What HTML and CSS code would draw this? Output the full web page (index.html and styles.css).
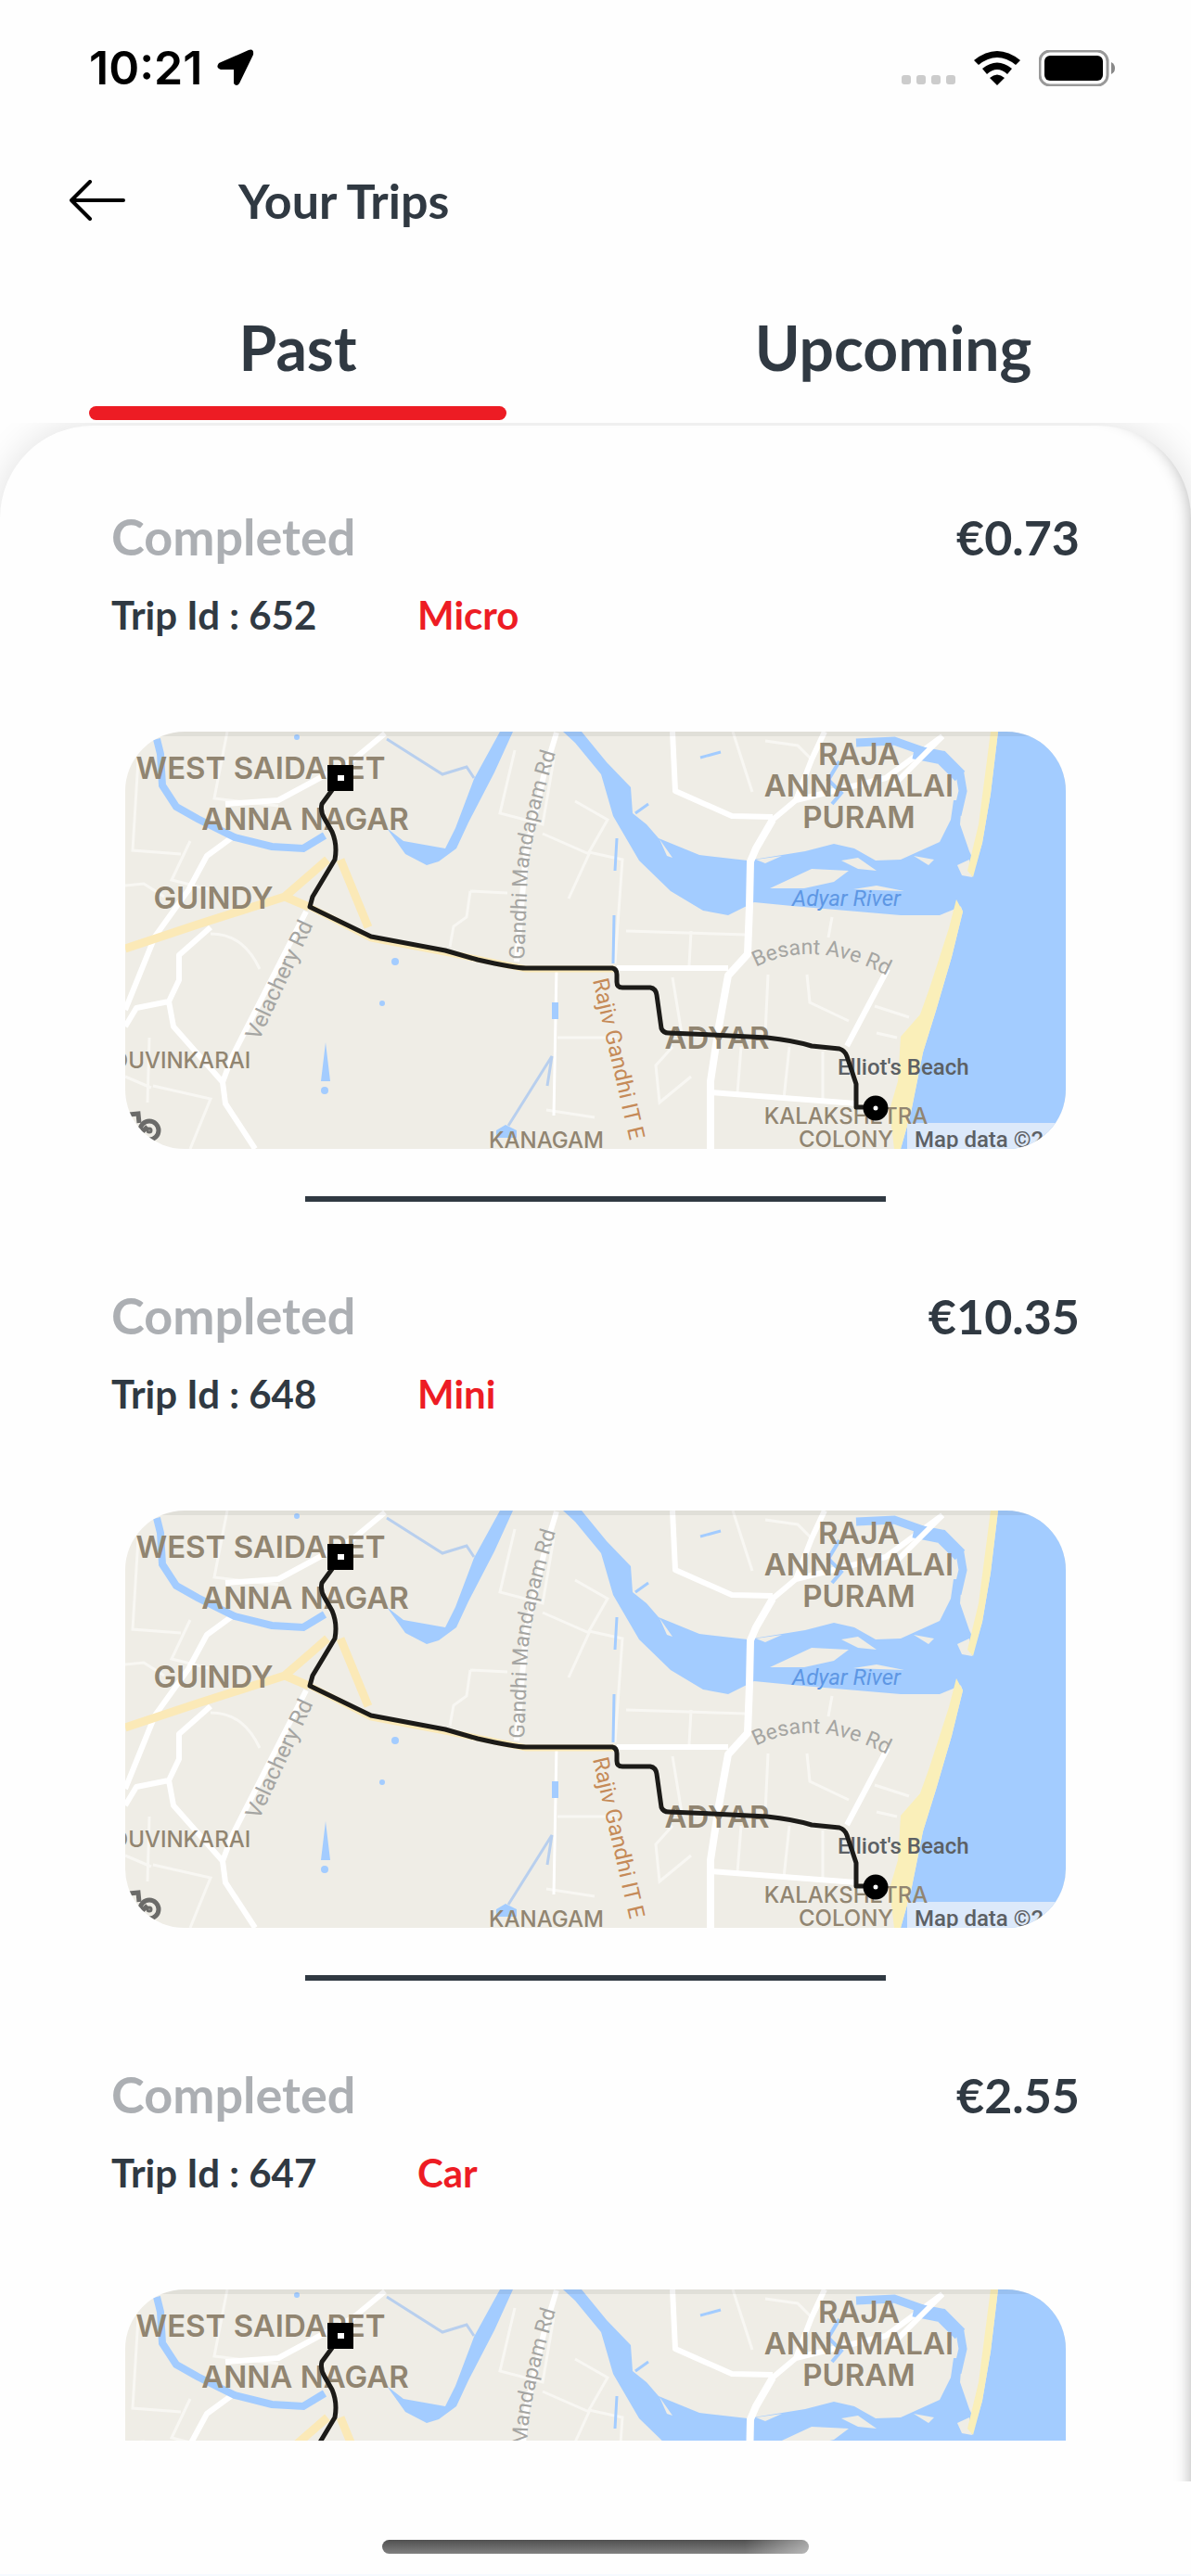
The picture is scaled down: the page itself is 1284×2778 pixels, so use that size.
FILE: index.html
```html
<!DOCTYPE html>
<html lang="en">

<head>
    <meta charset="UTF-8">
    <meta name="viewport" content="width=device-width, initial-scale=1.0">
    <title>Your Trips</title>
    <link rel="stylesheet" href="styles.css">
</head>

<body>

    <!-- shared map drawing -->
    <svg class="defs" width="0" height="0" aria-hidden="true">
        <symbol id="ground" viewBox="0 0 1014 450">
            <rect width="1014" height="450" fill="#efede6" />
            <g fill="none" stroke="#f8f7f3" stroke-width="3">
                <path d="M110 0L96 72 165 80M14 30L8 128 60 132M70 118L50 160 90 170M0 166L20 164 42 178" />
                <path d="M92 218C120 218 135 235 145 256M30 382L92 396 70 450M24 400L26 330M0 372L28 384" />
                <path d="M420 20L404 88 450 100 462 30M450 110L500 132 478 180M485 75L520 95 500 130 536 138 528 250" />
                <path d="M372 172L412 174M372 172L368 200 354 210 350 232M466 330L530 330M454 408L506 416" />
                <path d="M540 215L670 219M610 215L608 252M655 0L676 65M690 10L725 15 740 30M590 265L600 326M693 262L690 326M735 262L738 292 780 312M808 296L845 308M762 200L758 222M590 340L572 360 576 400 610 372M664 340L660 390M716 340L710 396M752 345L752 398M810 325L832 330" />
            </g>
            <g fill="none" stroke="#fff" stroke-width="6" stroke-linejoin="round">
                <path d="M280 2L245 31 165 74 108 78M118 112L88 134 68 171 32 221 0 300" />
                <path d="M92 211L58 241 58 268 47 291 52 318 105 378 108 401 140 450M47 291L12 298 0 318M195 194L115 351 105 378" />
                <path d="M465 1L452 44 432 131 422 248" />
                <path d="M465 254L462 414" stroke-width="3" />
                <path d="M590 0L593 64 654 91 698 92M754 0L740 30 723 74 698 95 678 128M723 74L820 50 881 5" />
                <path d="M530 255L650 255M631 389L788 401M822 256L778 339" />
            </g>
            <g fill="none" stroke="#fbe9b7" stroke-width="9">
                <path d="M0 234L78 208 172 178 218 138M172 178L198 189M232 138L262 211" />
                <path d="M199 189L265 223 345 238 432 256 528 256" stroke-width="7" />
            </g>
            <g fill="#a3ccff">
                <path d="M282 104L300 118 345 126 356 104 376 51 404 0 418 0 398 44 370 98 357 126 338 140 325 144 302 132Z" />
                <path d="M472 0L485 12 513 46 526 91 554 139 588 172 623 193 650 198 678 184 719 188 836 198 878 198 895 191 930 175 920 150 910 129 900 100 902 74 893 74 890 95 878 119 836 138 809 139 786 126 764 121 733 129 671 139 619 133 575 115 562 100 547 88 545 60 519 33 492 0Z" />
                <path d="M941 0L933 67 924 120 913 157 898 168 898 181 903 194 891 243 874 301 860 346 847 411 836 450 1014 450 1014 0Z" />
                <path d="M216 335L221 377 211 377ZM460 292h7v18h-7zM400 430l10-6 12 6v8h-22z" />
                <circle cx="291" cy="248" r="4" />
                <circle cx="277" cy="293" r="3" />
                <circle cx="215" cy="387" r="4" />
                <circle cx="185" cy="6" r="3" />
            </g>
            <g fill="none" stroke="#a3ccff">
                <path d="M34 8L38 24 40 58 55 81 78 94 118 114 158 124 192 126 215 112" stroke-width="8" />
                <path d="M788 12L829 10 874 26 900 46 903 64 897 90" stroke-width="9" />
                <path d="M850 22L880 28 900 48" stroke-width="15" />
                <path d="M770 32L758 52 772 66 762 78" stroke-width="4" />
                <path d="M282 8L342 46 368 38 376 50M413 425L460 350 455 382" stroke-width="3" stroke="#b8cfee" />
                <path d="M530 115L528 150M527 198L526 250M550 88L564 78M620 28L642 22" stroke-width="3" />
            </g>
            <g fill="#efede6">
                <path d="M695 169L740 148 780 150 764 162 732 169ZM772 139L790 136 810 150 790 148ZM850 134L872 138 866 144ZM785 170L810 166 840 172ZM680 138L708 134 690 142ZM576 116L590 136 584 134Z" />
                <path d="M897 144L910 138 913 157 902 155Z" />
            </g>
            <g fill="#faefb9">
                <path d="M933 0L941 0 933 67 924 120 914 157 908 150 920 100Z" />
                <path d="M896 181L903 194 891 243 874 301 860 346 847 411 836 450 829 450 824 408 833 377 836 329 857 305 867 277 888 212Z" />
            </g>
            <path d="M698 95L680 126 674 140 673 188 671 240 650 263 640 318 631 377 631 450" fill="none" stroke="#fff" stroke-width="8" stroke-linejoin="round" />
            <path d="M826 60L881 5" fill="none" stroke="#fff" stroke-width="6" />
            <rect x="843" y="422" width="171" height="28" fill="#dce9fa" />
            <g fill="none" stroke="#6b6b69" stroke-width="5">
                <path d="M4 413L14 412 15 422M14 436L24 426" />
                <circle cx="26" cy="430" r="10" />
                <circle cx="26" cy="430" r="2" stroke-width="3" />
            </g>
            <rect width="1014" height="5" fill="#000" opacity=".06" />
        </symbol>
        <symbol id="route" viewBox="0 0 1014 450">
            <path d="M232 49L223 63 212 78Q210 86 215 94L223 108Q229 122 226 138L202 178 199 189 265 221 345 236 380 246Q420 255 432 255H525Q530 256 530 262V270Q530 276 536 276H566Q572 277 573 284L578 320Q580 325 586 325L633 327 692 330Q720 333 740 339L770 342Q776 344 778 350L788 380V405H809" fill="none" stroke="#1c1b18" stroke-width="5" stroke-linejoin="round" />
            <rect x="218" y="36" width="28" height="28" fill="#000" />
            <rect x="229" y="47" width="7" height="6" fill="#fff" />
            <circle cx="809" cy="406" r="8" fill="#fff" stroke="#000" stroke-width="11" />
        </symbol>
        <path id="gandhi" d="M430 246L434 150Q440 100 466 16" />
        <path id="besant" d="M680 254Q745 220 830 268" />
    </svg>

    <div class="status">
        <span class="time">10:21</span>
        <svg class="locate" viewBox="0 0 40 40" width="40" height="40">
            <path d="M34 1Q40-1 39 6L24 37Q21 41 18 37V22H4Q-2 20 2 15Z" />
        </svg>
        <svg class="signal" viewBox="0 0 58 10" width="58" height="10">
            <rect width="10" height="10" rx="3" />
            <rect x="16" width="10" height="10" rx="3" />
            <rect x="32" width="10" height="10" rx="3" />
            <rect x="48" width="10" height="10" rx="3" />
        </svg>
        <svg class="wifi" viewBox="0 0 50 37" width="50" height="37">
            <path d="M0 10Q25-10 50 10L45 15Q25-1 5 15Z" />
            <path d="M9 19Q25 6 41 19L36 25Q25 15 14 25Z" />
            <path d="M17 29Q25 22 33 29L25 37Z" />
        </svg>
        <svg class="battery" viewBox="0 0 82 39" width="82" height="39">
            <rect x="1" y="1" width="73" height="37" rx="11" fill="none" stroke="#999" stroke-width="3" />
            <rect x="6" y="6" width="63" height="27" rx="6" />
            <path d="M78 13Q82 15 82 19.500T78 26Z" fill="#888" />
        </svg>
    </div>

    <header class="top">
        <button class="back" aria-label="Back">
            <svg viewBox="0 0 60 44" width="60" height="44">
                <path d="M22 2L2 22 22 42M2 22H58" />
            </svg>
        </button>
        <h1>Your Trips</h1>
    </header>

    <nav class="tabs">
        <button class="tab active">Past</button>
        <button class="tab">Upcoming</button>
    </nav>

    <main class="panel">
        <div class="sheet">
            <div class="list">

                <article class="trip">
                    <div class="row">
                        <span class="state">Completed</span>
                        <span class="price">€0.73</span>
                    </div>
                    <div class="info">
                        <span class="id">Trip Id : 652</span>
                        <span class="type">Micro</span>
                    </div>
                    <svg class="map" viewBox="0 0 1014 450">
                        <use href="#ground" />
                        <g class="area">
                            <text x="146" y="51">WEST SAIDAPET</text>
                            <text x="194" y="106">ANNA NAGAR</text>
                            <text x="95" y="191">GUINDY</text>
                            <text x="791" y="36">RAJA</text>
                            <text x="791" y="70">ANNAMALAI</text>
                            <text x="791" y="104">PURAM</text>
                            <text x="638" y="342">ADYAR</text>
                        </g>
                        <g class="area small">
                            <text x="60" y="363">OUVINKARAI</text>
                            <text x="454" y="449">KANAGAM</text>
                            <text x="777" y="423">KALAKSHETRA</text>
                            <text x="777" y="448">COLONY</text>
                        </g>
                        <g class="road">
                            <text transform="translate(144 334) rotate(-65)">Velachery Rd</text>
                            <text><textPath href="#gandhi">Gandhi Mandapam Rd</textPath></text>
                            <text><textPath href="#besant">Besant Ave Rd</textPath></text>
                            <text class="highway" transform="translate(504 268) rotate(77)">Rajiv Gandhi IT E</text>
                            <text class="river" x="719" y="188">Adyar River</text>
                            <text class="place" x="768" y="370">Elliot's Beach</text>
                            <text class="place" x="851" y="448">Map data ©2</text>
                        </g>
                        <use href="#route" />
                    </svg>
                    <hr>
                </article>

                <article class="trip">
                    <div class="row">
                        <span class="state">Completed</span>
                        <span class="price">€10.35</span>
                    </div>
                    <div class="info">
                        <span class="id">Trip Id : 648</span>
                        <span class="type">Mini</span>
                    </div>
                    <svg class="map" viewBox="0 0 1014 450">
                        <use href="#ground" />
                        <g class="area">
                            <text x="146" y="51">WEST SAIDAPET</text>
                            <text x="194" y="106">ANNA NAGAR</text>
                            <text x="95" y="191">GUINDY</text>
                            <text x="791" y="36">RAJA</text>
                            <text x="791" y="70">ANNAMALAI</text>
                            <text x="791" y="104">PURAM</text>
                            <text x="638" y="342">ADYAR</text>
                        </g>
                        <g class="area small">
                            <text x="60" y="363">OUVINKARAI</text>
                            <text x="454" y="449">KANAGAM</text>
                            <text x="777" y="423">KALAKSHETRA</text>
                            <text x="777" y="448">COLONY</text>
                        </g>
                        <g class="road">
                            <text transform="translate(144 334) rotate(-65)">Velachery Rd</text>
                            <text><textPath href="#gandhi">Gandhi Mandapam Rd</textPath></text>
                            <text><textPath href="#besant">Besant Ave Rd</textPath></text>
                            <text class="highway" transform="translate(504 268) rotate(77)">Rajiv Gandhi IT E</text>
                            <text class="river" x="719" y="188">Adyar River</text>
                            <text class="place" x="768" y="370">Elliot's Beach</text>
                            <text class="place" x="851" y="448">Map data ©2</text>
                        </g>
                        <use href="#route" />
                    </svg>
                    <hr>
                </article>

                <article class="trip">
                    <div class="row">
                        <span class="state">Completed</span>
                        <span class="price">€2.55</span>
                    </div>
                    <div class="info">
                        <span class="id">Trip Id : 647</span>
                        <span class="type">Car</span>
                    </div>
                    <svg class="map" viewBox="0 0 1014 450">
                        <use href="#ground" />
                        <g class="area">
                            <text x="146" y="51">WEST SAIDAPET</text>
                            <text x="194" y="106">ANNA NAGAR</text>
                            <text x="791" y="36">RAJA</text>
                            <text x="791" y="70">ANNAMALAI</text>
                            <text x="791" y="104">PURAM</text>
                        </g>
                        <g class="road">
                            <text><textPath href="#gandhi">Gandhi Mandapam Rd</textPath></text>
                        </g>
                        <use href="#route" />
                    </svg>
                </article>

            </div>
        </div>
    </main>

    <footer class="home">
        <div class="bar"></div>
    </footer>

</body>

</html>
```
FILE: styles.css
```css
* {
    box-sizing: border-box;
}

body {
    margin: 0;
    height: 100vh;
    display: flex;
    flex-direction: column;
    background-color: #fefefe;
    color: #303942;
    font-family: Lato, "Open Sans", sans-serif;
    font-weight: 700;
}

button {
    border: 0;
    padding: 0;
    background: none;
    color: inherit;
    font: inherit;
}

.defs {
    position: absolute;
}

/* status bar */
.status {
    display: flex;
    align-items: center;
    height: 144px;
    padding: 2px 82px 0 96px;
}

.time {
    color: #000;
    font-family: Inter, sans-serif;
    font-size: 50px;
    font-weight: 600;
}

.locate {
    margin-left: 16px;
}

.signal {
    margin-left: auto;
    margin-top: 26px;
    fill: #ccc;
}

.wifi {
    margin: 0 20px;
}

/* title */
.top {
    display: flex;
    align-items: center;
    height: 144px;
    padding-left: 75px;
}

.back {
    display: flex;
}

.back path {
    fill: none;
    stroke: #000;
    stroke-width: 4;
    stroke-linecap: round;
    stroke-linejoin: round;
}

h1 {
    margin: 0 0 0 122px;
    font-size: 52px;
}

/* tabs */
.tabs {
    display: flex;
    height: 168px;
}

.tab {
    flex: 1;
    display: flex;
    flex-direction: column;
    align-items: center;
    justify-content: flex-end;
    padding-bottom: 3px;
    font-size: 66px;
    line-height: 76px;
}

.tab::after {
    content: '';
    width: 70%;
    height: 15px;
    margin-top: 25px;
    border-radius: 8px;
}

.active::after {
    background-color: #ed1c24;
}

/* trip list */
.panel {
    flex: 1;
    min-height: 0;
    padding-top: 3px;
    overflow: hidden;
}

.sheet {
    height: 110%;
    border-radius: 100px 100px 0 0;
    background-color: #fefefe;
    box-shadow: 0 0 40px rgba(0, 0, 0, .12), inset -16px 0 16px -14px rgba(0, 0, 0, .25);
}

.list {
    height: calc((100vh - 561px) * .98);
    padding: 89px 120px 0;
    overflow: hidden;
}

.trip {
    margin-bottom: 92px;
}

.row {
    display: flex;
    justify-content: space-between;
    font-size: 52px;
    line-height: 62px;
}

.state {
    color: #acafb3;
    font-size: 54px;
}

.info {
    display: grid;
    grid-template-columns: 330px 1fr;
    margin-top: 28px;
    font-size: 42px;
    line-height: 50px;
}

.type {
    color: #ed1c24;
}

.map {
    display: block;
    width: calc(100% - 30px);
    margin: 101px auto 0;
    border-radius: 64px;
}

.trip hr {
    width: 60%;
    height: 6px;
    margin: 51px auto 0;
    border: 0;
    background-color: #303942;
}

/* map labels */
.area {
    fill: #918571;
    font-family: Inter, sans-serif;
    font-size: 33px;
    font-weight: 600;
    text-anchor: middle;
}

.small {
    font-size: 24px;
    font-weight: 500;
}

.road {
    fill: #a5a5a2;
    font-family: Roboto, sans-serif;
    font-size: 24px;
    font-weight: 400;
}

.road textPath {
    font-size: 23px;
}

.highway {
    fill: #c58a58;
}

.river {
    fill: #5e97e4;
    font-style: italic;
}

.place {
    fill: #5c6064;
    font-weight: 500;
}

/* home indicator */
.home {
    height: 102px;
    padding-top: 63px;
    border-bottom: 2px solid #f5faff;
}

.bar {
    width: 460px;
    height: 15px;
    margin: 0 auto;
    border-radius: 8px;
    background: linear-gradient(to right, transparent 85%, rgba(255, 255, 255, .45)), linear-gradient(#505050, #808080);
}
```
